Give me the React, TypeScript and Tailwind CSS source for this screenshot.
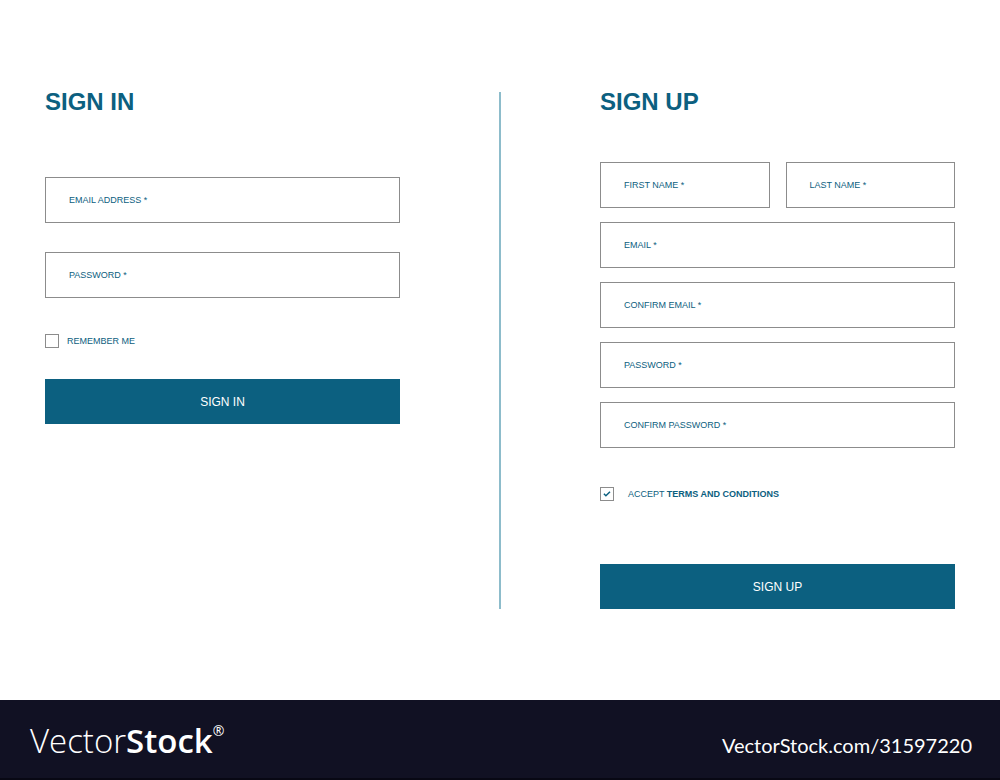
import type { ReactNode } from 'react';

type FieldProps = { label: string; name: string; type?: string };

function Field({ label, name, type = 'text' }: FieldProps) {
  return (
    <label className="flex h-[46px] min-w-0 items-center gap-2 border border-[#8c8c8c] px-[23px] focus-within:border-[#0c6080]">
      <span className="shrink-0">{label}</span>
      <input name={name} type={type} className="h-full w-0 min-w-0 flex-1 bg-transparent outline-none" />
    </label>
  );
}

type CheckProps = { name: string; checked?: boolean; gap: string; children: ReactNode };

function Check({ name, checked = false, gap, children }: CheckProps) {
  return (
    <label className={`flex items-center ${gap}`}>
      <span className="grid size-3.5 shrink-0 place-items-center">
        <input
          type="checkbox"
          name={name}
          defaultChecked={checked}
          className="peer col-start-1 row-start-1 size-3.5 appearance-none border border-[#8c8c8c]"
        />
        <svg
          viewBox="0 0 14 14"
          className="pointer-events-none invisible col-start-1 row-start-1 size-3.5 peer-checked:visible"
          fill="none"
          stroke="#0c6080"
          strokeWidth="1.5"
        >
          <path d="M3.9 6.8 5.9 8.7 10 4.7" />
        </svg>
      </span>
      <span>{children}</span>
    </label>
  );
}

function Submit({ children }: { children: ReactNode }) {
  return (
    <button type="submit" className="h-[45px] w-full bg-[#0c6080] text-[12px] leading-4 text-white">
      {children}
    </button>
  );
}

export default function App() {
  return (
    <div className="flex min-h-screen flex-col bg-white font-['Liberation_Sans',Arial,sans-serif] text-[9px] leading-3 text-[#0c6080]">
      <main className="grid flex-1 grid-cols-[1fr_2px_1fr] content-start gap-x-[99px] px-[45px] pt-[92px] pb-[90px]">
        <form onSubmit={(e) => e.preventDefault()}>
          <h1 className="text-[24px] leading-5 font-bold">SIGN IN</h1>
          <div className="mt-[65px] flex flex-col gap-[29px]">
            <Field label="EMAIL ADDRESS *" name="email" type="email" />
            <Field label="PASSWORD *" name="password" type="password" />
          </div>
          <div className="mt-9 mb-[31px]">
            <Check name="remember" gap="gap-2">REMEMBER ME</Check>
          </div>
          <Submit>SIGN IN</Submit>
        </form>

        <div className="bg-[#8dbccb]" />

        <form onSubmit={(e) => e.preventDefault()}>
          <h1 className="text-[24px] leading-5 font-bold">SIGN UP</h1>
          <div className="mt-[50px] flex flex-col gap-3.5">
            <div className="grid grid-cols-2 gap-4">
              <Field label="FIRST NAME *" name="firstName" />
              <Field label="LAST NAME *" name="lastName" />
            </div>
            <Field label="EMAIL *" name="email" type="email" />
            <Field label="CONFIRM EMAIL *" name="confirmEmail" type="email" />
            <Field label="PASSWORD *" name="password" type="password" />
            <Field label="CONFIRM PASSWORD *" name="confirmPassword" type="password" />
          </div>
          <div className="mt-[39px] mb-[63px]">
            <Check name="terms" checked gap="gap-3.5">
              ACCEPT <b>TERMS AND CONDITIONS</b>
            </Check>
          </div>
          <Submit>SIGN UP</Submit>
        </form>
      </main>

      <footer className="flex h-20 items-center justify-between border-b-2 border-[#080814] bg-[#111123] pt-1 pr-7 pl-[30px] text-white">
        <div className="flex items-start font-['Open_Sans',sans-serif] text-[33px] leading-10">
          <span className="font-light">Vector</span>
          <span className="font-semibold">Stock</span>
          <span className="text-[14px] leading-5">®</span>
        </div>
        <div className="pt-2 font-['Lato',sans-serif] text-[20px] leading-6">VectorStock.com/31597220</div>
      </footer>
    </div>
  );
}
